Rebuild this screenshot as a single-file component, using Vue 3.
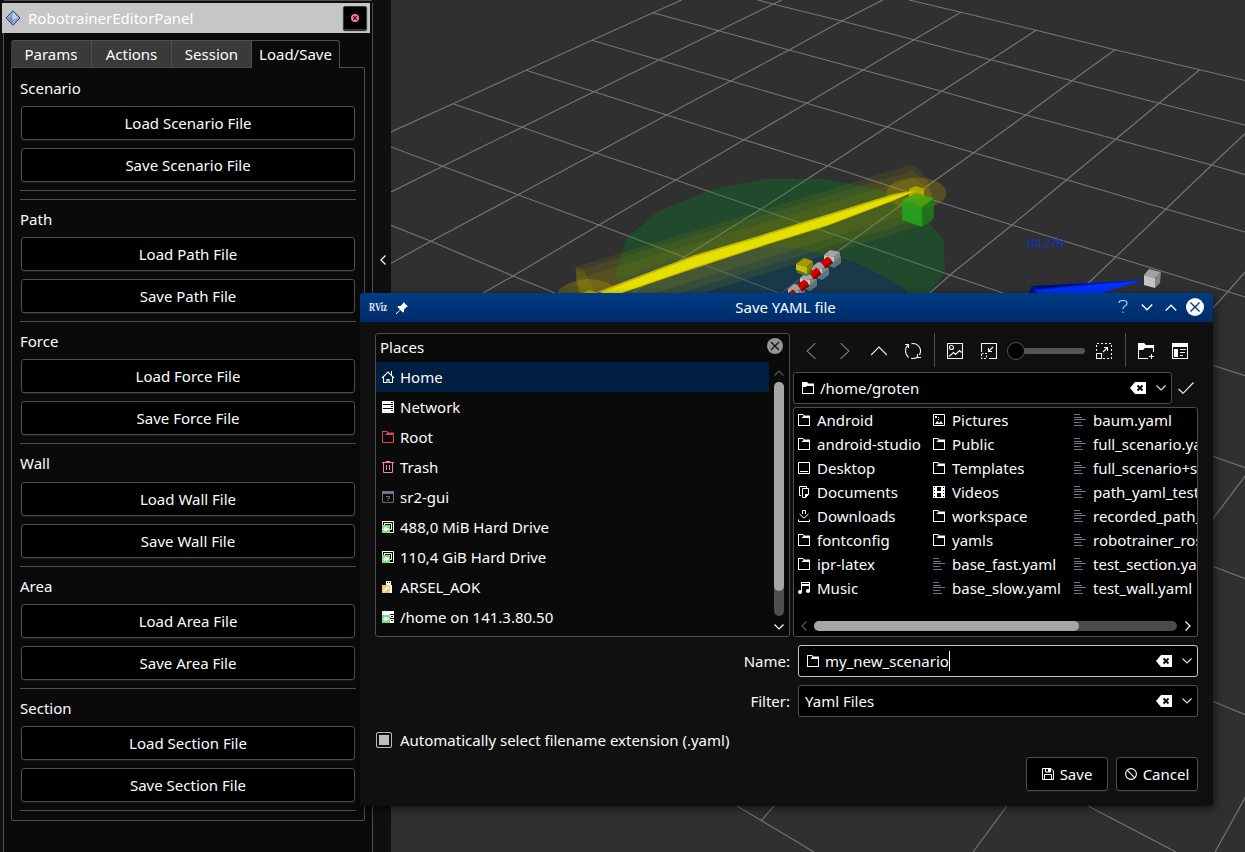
<script setup>
const tabs = ['Params', 'Actions', 'Session', 'Load/Save']
const groups = [
  { name: 'Scenario', cls: 'first' },
  { name: 'Path', cls: '' },
  { name: 'Force', cls: '' },
  { name: 'Wall', cls: 'roomy' },
  { name: 'Area', cls: '' },
  { name: 'Section', cls: '' },
]
const places = [
  { name: 'Home', icon: 'home' },
  { name: 'Network', icon: 'network' },
  { name: 'Root', icon: 'root' },
  { name: 'Trash', icon: 'trash' },
  { name: 'sr2-gui', icon: 'unknown' },
  { name: '488,0 MiB Hard Drive', icon: 'drive' },
  { name: '110,4 GiB Hard Drive', icon: 'drive' },
  { name: 'ARSEL_AOK', icon: 'usb' },
  { name: '/home on 141.3.80.50', icon: 'remote' },
]
const columns = [
  [
    ['folder', 'Android'], ['folder', 'android-studio'], ['desktop', 'Desktop'], ['documents', 'Documents'],
    ['download', 'Downloads'], ['folder', 'fontconfig'], ['folder', 'ipr-latex'], ['music', 'Music'],
  ],
  [
    ['picture', 'Pictures'], ['folder', 'Public'], ['folder', 'Templates'], ['video', 'Videos'],
    ['folder', 'workspace'], ['folder', 'yamls'], ['text', 'base_fast.yaml'], ['text', 'base_slow.yaml'],
  ],
  [
    ['text', 'baum.yaml'], ['text', 'full_scenario.yaml'], ['text', 'full_scenario+s'], ['text', 'path_yaml_test'],
    ['text', 'recorded_path_'], ['text', 'robotrainer_ros'], ['text', 'test_section.yaml'], ['text', 'test_wall.yaml'],
  ],
]
const gridLines = [
  '391,132 453,103.7 526,70.3 592,40.3 653,12.7 681.7,0',
  '391,192 442.7,166.3 522,127.3 594,91.7 659,60 718.7,30.7 781.7,0',
  '391,263.3 431,241.3 518,194.7 596,153 666.7,115 730.7,81 789,50 841.7,21 882.7,0',
  '483,293 513,276 599,225 675.7,180 744,139.7 806.7,103.3 863,70 914,39.7 961,12.3',
  '632.7,293 684,257 760.7,209.3 827.7,165.7 887,127 941.7,91.3 991,59.7 1036,30.3',
  '780,294 852,240.7 916,194 973.7,152.7 1025.7,115 1072,80.7 1115,49.7',
  '929.7,293 950,275 1012,225 1066.7,179.7 1115.7,139.3 1159,103.3 1199.7,69.7',
  '1078,293 1115.7,257 1166,209 1211.7,165 1245,133.7',
  '1213,308 1226.7,293 1245,272',
  '391,225.3 431,241.3 513,276 555,293',
  '391,147 442.7,166.3 518,194.7 599,225 684,257 779,293',
  '453,103.7 522,127.3 596,153 675.7,180 760.7,209.3 852,240.7 950,275 1003,293',
  '526,70.3 594,91.7 666.7,115 744,139.7 827.7,165.7 920,196 1012,225 1115.7,257 1226,291 1245,297',
  '592,40.3 659,60 730.7,81 806.7,103.3 887,127 973.7,152.7 1066.7,179.7 1166,209 1245,232',
  '653,12.7 718.7,30.7 789,50 863,70 941.7,91.3 1025.7,115 1115.7,139.3 1211.7,165 1245,174.7',
  '757.7,0 773,4 841.7,21 914,39.7 991,59.7 1072,80.7 1159,103.3 1245,125',
  '909,0 961,12.3 1036,30.3 1115,49.7 1199.7,69.7 1245,80.5',
  '1212,365 1246,376', '1212,456 1246,468', '1212,520 1246,475', '1212,566 1246,579', '1212,701 1246,715',
  '737,806 814,852', '774,806 761,821', '1007,806 973,852', '1088,806 1176,852', '1215,852 1246,796',
]
const beads = [[832, 256], [820, 268], [808, 279], [796, 290]]
const links = [[827, 262], [815.5, 273], [803.5, 285], [792, 295]]
</script>

<template>
  <div class="screen">
    <svg class="sprite" aria-hidden="true">
      <symbol id="i-folder" viewBox="0 0 12 12"><path fill="currentColor" fill-rule="evenodd" d="M0 0h5l1.500 1.500H12V12H0zM1 1h4l.5 1-2 2H11v7H1z" /></symbol>
      <symbol id="i-folderopen" viewBox="0 0 12 12"><path fill="currentColor" fill-rule="evenodd" d="M0 0h5l1.500 1.500H12V12H0zM1 4v7h10V4H5L3.500 5H1z" /></symbol>
      <symbol id="i-root" viewBox="0 0 12 12"><path fill="#da4453" fill-rule="evenodd" d="M0 0h5l1.500 1.500H12V12H0zM1 1h4v1L3 4h8v7H1z" /></symbol>
      <symbol id="i-home" viewBox="0 0 12 12">
        <path fill="none" stroke="#fff" stroke-width="1.100" d="M0 7L6 1l6 6M1.500 6v5.500h3.500v-3h2v3h3.500V6" /><path fill="#fff" d="M9 0h1v4H9z" />
      </symbol>
      <symbol id="i-network" viewBox="0 0 12 12"><path fill="#fff" d="M0 0h12v12H0z" /><path stroke="#0a0a0a" d="M1 3.500h10M1 7.500h10" /><path stroke="#0a0a0a" d="M9 1.500h2M9 5.500h2M9 9.500h2" /></symbol>
      <symbol id="i-trash" viewBox="0 0 12 12"><path fill="none" stroke="#fd7ea8" d="M0 1.500h12M4 1V.5h4V1M1.500 2v9.500h9V2M4.500 4v5M7.500 4v5" /></symbol>
      <symbol id="i-unknown" viewBox="0 0 12 12">
        <path fill="none" stroke="#5d6b7b" d="M.5.5h11v11H.5z" /><path fill="#6a7888" d="M0 0h12v3H0z" /><path fill="none" stroke="#6a7888" d="M4 5.500h3.500v2H6v1M6 9v1" />
      </symbol>
      <symbol id="i-drive" viewBox="0 0 12 12">
        <path fill="none" stroke="#fff" d="M.5.5h11v11h-4M3 2.500h6.500v6H8" /><path fill="none" stroke="#fff" d="M.5 0v5M2.500 2v3" /><path fill="#70e680" d="M0 4h8v8H0z" /><path fill="#fff" d="M1 8l2-2h2v1h2v2H5v1H3z" />
      </symbol>
      <symbol id="i-usb" viewBox="0 0 12 12">
        <path fill="#fff" d="M4 0h5v4H4zM3 4h7v8H3z" /><path fill="#0a0a0a" d="M5 1h1v1H5zM7 1h1v1H7z" /><path fill="#fdc56a" d="M0 4h8v8H0z" /><path fill="#fff" d="M1 9l2-1 3-3 1 2-3 2-2 2z" />
      </symbol>
      <symbol id="i-remote" viewBox="0 0 12 12">
        <path fill="#fff" d="M0 0h12v12H0z" /><path stroke="#0a0a0a" d="M8 3.500h4M9 5.500h2M8 7.500h4M9 9.500h2" /><path fill="#70e680" d="M0 4h8v8H0z" /><path fill="#fff" d="M1 8l2-2h2v1h2v2H5v1H3z" />
      </symbol>
      <symbol id="i-desktop" viewBox="0 0 12 12"><path fill="none" stroke="#fff" d="M.5.5h11v11H.5zM2 9.500h8" /></symbol>
      <symbol id="i-documents" viewBox="0 0 12 12"><path fill="none" stroke="#fff" d="M3 9.500H1.500V.5h7V2M4.500 2.500h6v6l-3 3h-3z" /><path fill="#fff" d="M7 8h4l-4 4z" /></symbol>
      <symbol id="i-download" viewBox="0 0 12 12"><path fill="none" stroke="#fff" d="M4.500 4V.5h3V4M1.500 4L6 8.200 10.500 4M.5 9.500v2h11v-2" /></symbol>
      <symbol id="i-music" viewBox="0 0 12 12"><path fill="#fff" d="M3 0h9v10h-1V4H4v6H3z" /><path fill="#000" d="M4 1h7v1H4z" /><circle cx="2" cy="10" r="2" fill="#fff" /><circle cx="10" cy="9" r="2" fill="#fff" /></symbol>
      <symbol id="i-picture" viewBox="0 0 12 12"><path fill="none" stroke="#fff" d="M.5.5h11v11H.5z" /><path fill="#fff" d="M2 2h2v2H2zM5 3h1v1H5zM2 10l2-3 2 2 2-2 2 3zM5 5h1v1H5z" /></symbol>
      <symbol id="i-video" viewBox="0 0 12 12"><path fill="#fff" fill-rule="evenodd" d="M0 0h12v12H0zM4 1h4v4H4zM4 7h4v4H4zM1 1h1v1H1zM1 4h1v1H1zM1 7h1v1H1zM1 10h1v1H1zM10 1h1v1h-1zM10 4h1v1h-1zM10 7h1v1h-1zM10 10h1v1h-1z" /></symbol>
      <symbol id="i-text" viewBox="0 0 12 12"><path stroke="#6b7886" d="M0 .5h6M0 3.500h8M0 5.500h12M0 8.500h7M0 11.500h9" /></symbol>
      <symbol id="i-clear" viewBox="0 0 16 12"><path fill="#fff" d="M0 6L5 0h11v12H5z" /><path stroke="#000" stroke-width="1.800" d="M7.500 3.500l5 5M12.500 3.500l-5 5" /></symbol>
      <symbol id="i-down" viewBox="0 0 10 6"><path fill="none" stroke="currentColor" stroke-width="1.200" d="M.5.5L5 5 9.500.5" /></symbol>
      <symbol id="i-up" viewBox="0 0 10 6"><path fill="none" stroke="currentColor" stroke-width="1.200" d="M.5 5.500L5 1l4.500 4.500" /></symbol>
      <symbol id="i-left" viewBox="0 0 6 10"><path fill="none" stroke="currentColor" stroke-width="1.200" d="M5.500.5L1 5l4.500 4.500" /></symbol>
      <symbol id="i-right" viewBox="0 0 6 10"><path fill="none" stroke="currentColor" stroke-width="1.200" d="M.5.5L5 5 .5 9.500" /></symbol>
    </svg>

    <aside class="side">
      <div class="topline"></div>
      <div class="dock">
        <header class="dock-title">
          <svg width="16" height="16" viewBox="0 0 16 16"><path d="M8 .8L15 8l-7 7.200L1 8z" fill="#8ea6d0" stroke="#2c3f6b" /><path d="M8 2l5 5.500-6 2.500z" fill="#c3d0e8" /><path d="M8 14L3 8.500l4-1.500z" fill="#6f8bc0" /></svg>
          <span>RobotrainerEditorPanel</span>
          <button class="dock-close"><svg width="8" height="8" viewBox="0 0 8 8"><circle cx="4" cy="4" r="4" fill="#f67aa8" /><path d="M2.200 2.200l3.600 3.600M5.800 2.200L2.200 5.800" stroke="#3a0a1c" stroke-width="1.200" /></svg></button>
        </header>
        <nav class="tabs">
          <div v-for="(t, i) in tabs" :key="t" class="tab" :class="{ on: i === 3 }">{{ t }}</div>
        </nav>
        <div class="pane">
          <section v-for="g in groups" :key="g.name" class="group" :class="g.cls">
            <h3>{{ g.name }}</h3>
            <button>Load {{ g.name }} File</button>
            <button>Save {{ g.name }} File</button>
            <hr>
            <hr v-if="g.cls === 'first'" class="second">
          </section>
        </div>
      </div>
      <div class="handle"><svg width="6" height="10"><use href="#i-left" /></svg></div>
    </aside>

    <svg class="view" width="854" height="852" viewBox="391 0 854 852">
      <g fill="none" stroke="#757575" stroke-width="1.150"><polyline v-for="l in gridLines" :key="l" :points="l" /></g>
      <path fill="#008320" fill-opacity=".3" d="M615 275L626 238.700 659 210.700 710 190 764 179H825L867 187 887 193 928 222 943.500 239 945 273 929 293H626z" />
      <path fill="#060da0" fill-opacity=".25" d="M620 280L663 262 720 251 767 247.700H797L855 262 903 287 908 293H610z" />
      <g fill="#b8a800">
        <path fill-opacity=".1" d="M575 267L910 165 917 167 927 178 933 197V222L702 293H580z" />
        <path fill-opacity=".1" d="M575 271L912 171 925 180 932 195V215L680 293H580z" />
        <path fill-opacity=".1" d="M576 279L914 178 930 192V207L655 293H578z" />
        <path fill-opacity=".18" d="M576 267l8 4 6 10 6 12H580l-4-10z" />
        <ellipse cx="916.500" cy="193" rx="30" ry="15.500" fill-opacity=".26" />
        <path fill-opacity=".28" d="M557 293q7-12 32-14 23 1 30 14z" />
      </g>
      <path fill="#b3a900" d="M583 293l6-3 10 3zM909 189l7-3 8 3v8l-7 3-8-3z" />
      <path fill="#c4b600" d="M597 292L693 255.500 760 235.500 827 214.500 893 194 917 190 893 201 827 226 760 247 693 269 622 293z" />
      <path fill="#e6e000" d="M600 293L693 257.500 760 237.500 827 216.500 893 196 915 191 893 200 827 225 760 246 693 267.500 621 293z" />
      <g opacity=".9"><path fill="#24a31c" d="M902 200l20 7v20l-20-7z" /><path fill="#1a7a1c" d="M922 207l12-9v20l-12 9z" /><path fill="#48a50f" d="M902 200l14-7 18 5-12 9z" /></g>
      <g>
        <path v-for="b in beads" :key="'s' + b[0]" :transform="`translate(${b[0] + 2} ${b[1] + 5})`" fill="#587781" d="M-6-2l13-3v7l-7 5-7-3z" />
        <g v-for="b in beads" :key="'b' + b[0]" :transform="`translate(${b[0]} ${b[1]})`">
          <path fill="#a6a6a6" d="M-8-1l6-5 10 2-6 5z" /><path fill="#c2c2c2" d="M-8-1L2 1v5l-3-1-2-2-5 0z" /><path fill="#868686" d="M2 1l6-5v5L2 6z" />
        </g>
        <g v-for="k in links" :key="'k' + k[0]" :transform="`translate(${k[0]} ${k[1]}) rotate(-38)`"><path fill="#d00000" d="M-5-4h9l1 4-1 4h-9z" /><path fill="#8d0000" d="M-5 2h9v2.500h-9z" /></g>
      </g>
      <path fill="#a39a00" d="M796 264l8-6 9 3-6 6z" /><path fill="#c6be0a" d="M796 264l11 3v7l-11-4z" /><path fill="#847d00" d="M807 267l6-6v7l-6 6z" /><path fill="#4f7128" d="M797 270l10 4 5-4-1 4-5 2-9-3z" />
      <path fill="#001bb4" d="M1032 286L1144 280 1102 293H1029z" /><path fill="#0030ff" d="M1036 290L1144 280 1102 293H1038z" /><path fill="#000e70" d="M1032 286l4 7h-7zM1033 286l60-3-56 6z" />
      <path fill="#c4c4c4" d="M1144 275l11 3v10l-11-3z" /><path fill="#858585" d="M1155 278l6-6-1 11-5 5z" /><path fill="#a2a2a2" d="M1144 275l5-6 12 3-6 6z" />
      <text x="1026" y="246.500" fill="#0430e8" font-family="Liberation Sans, sans-serif" font-size="10.500" textLength="38">101.27N</text>
    </svg>

    <div class="dialog">
      <header class="bar">
        <svg class="rviz" width="20" height="14" viewBox="0 0 20 14"><text x="0" y="11" fill="#e8e8e8" font-family="Liberation Serif, serif" font-weight="bold" font-size="12" textLength="18" lengthAdjust="spacingAndGlyphs">RViz</text></svg>
        <svg class="pin" width="12" height="12" viewBox="0 0 12 12"><path fill="#fff" d="M7.500 0L12 4.500l-1.500.5L8 7.500V10l-1 .5L4.300 8 .8 12H0v-.8l4-3.500L1.500 5 2 4h2.500L7 1.500z" /></svg>
        <h1>Save YAML file</h1>
        <div class="winbtns">
          <svg width="10" height="14" viewBox="0 0 10 14"><path fill="none" stroke="#b9c9e2" stroke-width="1.200" d="M1 3q0-2.500 4-2.500T9 3.500Q9 5 7 6T5 9" /><path fill="#8fa6cc" d="M4.300 11.500h1.400V13H4.300z" /></svg>
          <svg class="chev" width="12" height="7"><use href="#i-down" /></svg>
          <svg class="chev" width="12" height="7"><use href="#i-up" /></svg>
          <svg width="18" height="18" viewBox="0 0 18 18"><circle cx="9" cy="9" r="9" fill="#fff" /><path stroke="#003070" stroke-width="1.300" d="M4.500 4.500l9 9M13.500 4.500l-9 9" /></svg>
        </div>
      </header>
      <div class="content">
        <div class="places">
          <div class="phead"><span>Places</span>
            <svg width="16" height="16" viewBox="0 0 16 16"><circle cx="8" cy="8" r="8" fill="#959595" /><path stroke="#111" stroke-width="1.200" d="M4 4l8 8M12 4l-8 8" /></svg>
          </div>
          <div class="pbody">
            <ul>
              <li v-for="(p, i) in places" :key="p.name" :class="{ sel: i === 0 }"><svg width="12" height="12"><use :href="'#i-' + p.icon" /></svg>{{ p.name }}</li>
            </ul>
            <div class="vscroll">
              <svg class="dim" width="10" height="6"><use href="#i-up" /></svg>
              <div class="vtrack"><div class="vthumb"></div></div>
              <svg width="10" height="6"><use href="#i-down" /></svg>
            </div>
          </div>
        </div>
        <div class="files">
          <div class="tools">
            <svg class="t dim2" viewBox="0 0 16 16"><path d="M12.500 0L4 8l8.500 8" /></svg>
            <svg class="t dim2" viewBox="0 0 16 16"><path d="M3.500 0L12 8l-8.500 8" /></svg>
            <svg class="t" viewBox="0 0 16 16"><path d="M0 12l8-8 8 8" /></svg>
            <svg class="t" viewBox="0 0 16 16"><path d="M0 1.500h3.500V5M3.300 2Q.5 4 .5 8q0 4 3 6.500M6.500.6Q11 0 13.500 3T15.500 8q0 2-1 4M16 14.500h-3.500V11M12.700 14Q10 16 6 15.300" /></svg>
            <i></i>
            <svg class="t" viewBox="0 0 16 16"><path d="M.5.5h15v15H.5zM2 13.500l4.500-4 2 2 4-4 2 2" /><circle cx="4.500" cy="4.500" r="2" /></svg>
            <svg class="t" viewBox="0 0 16 16"><path d="M.5 9V.5h15v15H8M12 4L7.500 8.500M7.500 5v3.500H11" /><path stroke-dasharray="2 1.500" d="M.5 10.500h5v5h-5z" /></svg>
            <div class="slider"><div class="groove"></div><div class="knob"></div></div>
            <svg class="t" viewBox="0 0 16 16"><path stroke-dasharray="2 2" d="M.5 8V.5h15v15H7" /><path d="M.5 10.500h5v5h-5zM7 9l4.500-4.500M8 4.500h3.500V8" /></svg>
            <i></i>
            <svg class="t" viewBox="0 0 16 16"><path d="M.5 5v10.500H10M15.500 9V3.500" /><path fill="#fff" stroke="none" d="M0 0h6l2 2h8v3H7L5 7H0z" /><path d="M11 13.500h5M13.500 11v5" /></svg>
            <svg class="t" viewBox="0 0 16 16"><path d="M.5.5h15v15H.5z" /><path fill="#fff" stroke="none" d="M0 0h16v4H0zM2 6h4v8H2z" /><path d="M8 6.500h6M8 9.500h5M8 12.500h3" /></svg>
          </div>
          <div class="pathrow">
            <div class="field path"><svg width="12" height="12"><use href="#i-folderopen" /></svg><span>/home/groten</span><svg class="clr" width="16" height="12"><use href="#i-clear" /></svg><svg class="dd" width="10" height="6"><use href="#i-down" /></svg></div>
            <svg width="16" height="12" viewBox="0 0 16 12"><path fill="none" stroke="#e8e8e8" stroke-width="1.200" d="M.5 7l4.500 4.300L15.500.5" /></svg>
          </div>
          <div class="list">
            <div class="cols">
              <ul v-for="(c, i) in columns" :key="i">
                <li v-for="f in c" :key="f[1]"><svg width="12" height="12"><use :href="'#i-' + f[0]" /></svg>{{ f[1] }}</li>
              </ul>
            </div>
            <div class="hscroll">
              <svg class="dim" width="6" height="10"><use href="#i-left" /></svg>
              <div class="htrack"><div class="hthumb"></div></div>
              <svg width="6" height="10"><use href="#i-right" /></svg>
            </div>
          </div>
        </div>
      </div>
      <div class="form">
        <label>Name:</label>
        <div class="field focus"><svg width="12" height="12"><use href="#i-folder" /></svg><span>my_new_scenario</span><b class="caret"></b><svg class="clr" width="16" height="12"><use href="#i-clear" /></svg><svg class="dd" width="10" height="6"><use href="#i-down" /></svg></div>
        <label>Filter:</label>
        <div class="field plain"><span>Yaml Files</span><svg class="clr" width="16" height="12"><use href="#i-clear" /></svg><svg class="dd" width="10" height="6"><use href="#i-down" /></svg></div>
      </div>
      <div class="auto"><span class="check"></span>Automatically select filename extension (.yaml)</div>
      <footer>
        <button><svg width="12" height="12" viewBox="0 0 12 12"><path fill="none" stroke="#fff" d="M.5.5H9L11.500 3v8.500H.5zM2.500 11V6.500h7V11M3.500 1v3h5V1" /><path fill="#fff" d="M6 1h2v3H6z" /></svg>Save</button>
        <button><svg width="12" height="12" viewBox="0 0 12 12"><circle cx="6" cy="6" r="5.400" fill="none" stroke="#fff" stroke-width="1.100" /><path stroke="#fff" stroke-width="1.100" d="M2.200 2.200l7.600 7.600" /></svg>Cancel</button>
      </footer>
    </div>
  </div>
</template>

<style>
html, body { background: #101010; overflow: hidden; }
</style>

<style scoped>
* { box-sizing: border-box; }
.screen { position: relative; width: 1245px; height: 852px; overflow: hidden; display: flex; background: #101010; color: #fcfcfc; font: 15px/20px "Noto Sans", sans-serif; }
.sprite { position: absolute; width: 0; height: 0; }
svg { display: block; flex: none; }
ul { list-style: none; margin: 0; padding: 0; }
button { font: inherit; color: inherit; background: #000; border: 1px solid #4d4d4d; border-radius: 3px; padding: 0; box-shadow: 0 1px 1px #1c1c1c; }
.side { width: 391px; height: 852px; display: flex; flex-wrap: wrap; align-content: flex-start; background: #0f0f0f; }
.topline { width: 368px; margin-left: 4px; height: 1px; background: #4d4d4d; margin-bottom: 2px; }
.dock { width: 370px; height: 849px; margin-left: 3px; background: #0a0a0a; border: 1px solid #4d4d4d; border-width: 0 1px; }
.dock-title { width: 368px; height: 30px; margin-left: -2px; background: #c6c6c6; display: flex; align-items: center; padding: 0 3px 0 4px; color: #fff; }
.dock-title svg { margin-left: -1px; }
.dock-title span { margin-left: 7px; flex: 1; }
.dock-close { width: 24px; height: 24px; display: grid; place-items: center; border-radius: 2px; border-color: #3c3c3c; }
.dock-close svg { margin: 0; }
.tabs { display: flex; margin: 7px 0 0 7px; height: 28px; position: relative; }
.tab { width: 80px; height: 27px; background: #3a3a3a; border: 1px solid #4f4f4f; border-right-width: 0; border-bottom: 0; text-align: center; line-height: 26px; }
.tab:nth-child(1) { border-left: 0; border-radius: 3px 0 0 0; }
.tab.on { width: 89px; height: 28px; background: #0a0a0a; border-right-width: 1px; border-radius: 0 3px 0 0; }
.pane { width: 354px; height: 754px; margin: -1px 0 0 7px; border: 1px solid #4d4d4d; border-radius: 0 2px 2px 2px; padding: 6px 8px 0; }
.group { height: 122px; padding-top: 4px; }
.group h3 { margin: 0; font: inherit; height: 28px; line-height: 20px; }
.group.first { height: 131px; }
.group.roomy { height: 123px; }
.group.roomy h3 { height: 29px; }
.group button { display: block; width: 334px; height: 34px; margin: 0 0 8px 1px; line-height: 32px; }
.group hr { border: 0; height: 1px; background: #4d4d4d; width: 336px; margin: 0; }
.group hr.second { margin-top: 8px; }
.handle { width: 18px; padding: 252px 0 0 7px; }
.view { background: #303030; }
.dialog { position: absolute; left: 360px; top: 293px; width: 853px; height: 513px; background: #101010; border-radius: 3px; box-shadow: 2px 3px 10px rgba(0, 0, 0, .55); overflow: hidden; }
.bar { height: 29px; background: linear-gradient(#003c85, #002b68); display: flex; align-items: center; }
.rviz { margin: -1px 0 0 9px; }
.pin { margin-left: 7px; }
.bar h1 { flex: 1; margin: -2px 0 0 45px; font: inherit; text-align: center; }
.winbtns { display: flex; align-items: center; gap: 12px; margin: -1px 9px 0 0; }
.winbtns svg:first-child { margin-right: 1px; }
.winbtns svg:last-child { margin-left: -3px; }
.content { display: flex; gap: 3px; padding: 11px 15px 0; height: 315px; }
.places { width: 415px; height: 304px; border: 1px solid #4d4d4d; border-radius: 3px; background: #0a0a0a; }
.phead { height: 28px; display: flex; justify-content: space-between; padding: 4px 6px 0 4px; }
.phead span { margin-top: -1px; }
.pbody { display: flex; }
.places ul { width: 393px; }
.places li { height: 30px; line-height: 31px; display: flex; align-items: center; gap: 6px; padding-left: 6px; }
.places li.sel { background: #001d42; }
.vscroll { width: 20px; display: flex; flex-direction: column; align-items: center; padding-top: 8px; }
.vtrack { width: 10px; height: 234px; border-radius: 5px; background: #4f4f4f; margin: 6px 0 8px; }
.vthumb { height: 209px; border-radius: 5px; background: #a6a6a6; }
.dim { color: #555; }
.files { width: 405px; }
.tools { height: 34px; display: flex; align-items: center; padding: 2px 0 0 10px; gap: 18px; }
.t { width: 16px; height: 16px; fill: none; stroke: #f4f4f4; stroke-width: 1.100; }
.t.dim2 { stroke: #777; }
.tools i { width: 1px; height: 34px; background: #4d4d4d; margin: -2px -6px 0 -5px; }
.slider { width: 78px; height: 18px; display: flex; align-items: center; margin: 0 -7px 0 -8px; position: relative; }
.groove { width: 70px; height: 6px; margin-left: 8px; border-radius: 3px; background: #555; }
.knob { position: absolute; left: 0; top: 0; width: 18px; height: 18px; border-radius: 9px; background: #000; border: 1px solid #555; }
.pathrow { display: flex; align-items: center; gap: 6px; margin-top: 5px; height: 32px; }
.field { display: flex; align-items: center; height: 32px; background: #000; border: 1px solid #4d4d4d; border-radius: 3px; padding: 0 5px 0 8px; }
.field span { margin-left: 6px; }
.field .clr { margin-left: auto; }
.field .dd { margin-left: 10px; color: #ddd; }
.path { width: 379px; }
.list { height: 230px; margin-top: 3px; background: #000; border: 1px solid #4d4d4d; border-radius: 3px; overflow: hidden; }
.cols { display: flex; height: 213px; padding-left: 4px; white-space: nowrap; }
.cols ul { flex: none; width: 135px; }
.cols ul:nth-child(2) { width: 141px; }
.cols li { height: 24px; display: flex; align-items: center; gap: 7px; }
.hscroll { display: flex; align-items: center; margin-left: 7px; }
.htrack { width: 363px; height: 10px; border-radius: 5px; background: #4b4b4b; margin: 0 8px 0 7px; }
.hthumb { width: 265px; height: 10px; border-radius: 5px; background: #a6a6a6; }
.form { display: grid; grid-template-columns: 1fr 400px; gap: 8px; padding: 8px 15px 0; align-items: center; }
.form label { text-align: right; }
.focus { border-color: #c4c4c4; }
.plain span { margin-left: -2px; }
.caret { width: 1px; height: 20px; background: #fff; }
.auto { display: flex; align-items: center; gap: 8px; margin: 12px 0 0 16px; height: 22px; }
.check { width: 16px; height: 16px; border: 1px solid #b5b5b5; border-radius: 2px; background: #bdbdbd; box-shadow: inset 0 0 0 2px #101010; }
footer { display: flex; justify-content: flex-end; gap: 8px; padding: 6px 15px 0; }
footer button { width: 82px; height: 34px; display: flex; align-items: center; justify-content: center; gap: 6px; }
</style>
